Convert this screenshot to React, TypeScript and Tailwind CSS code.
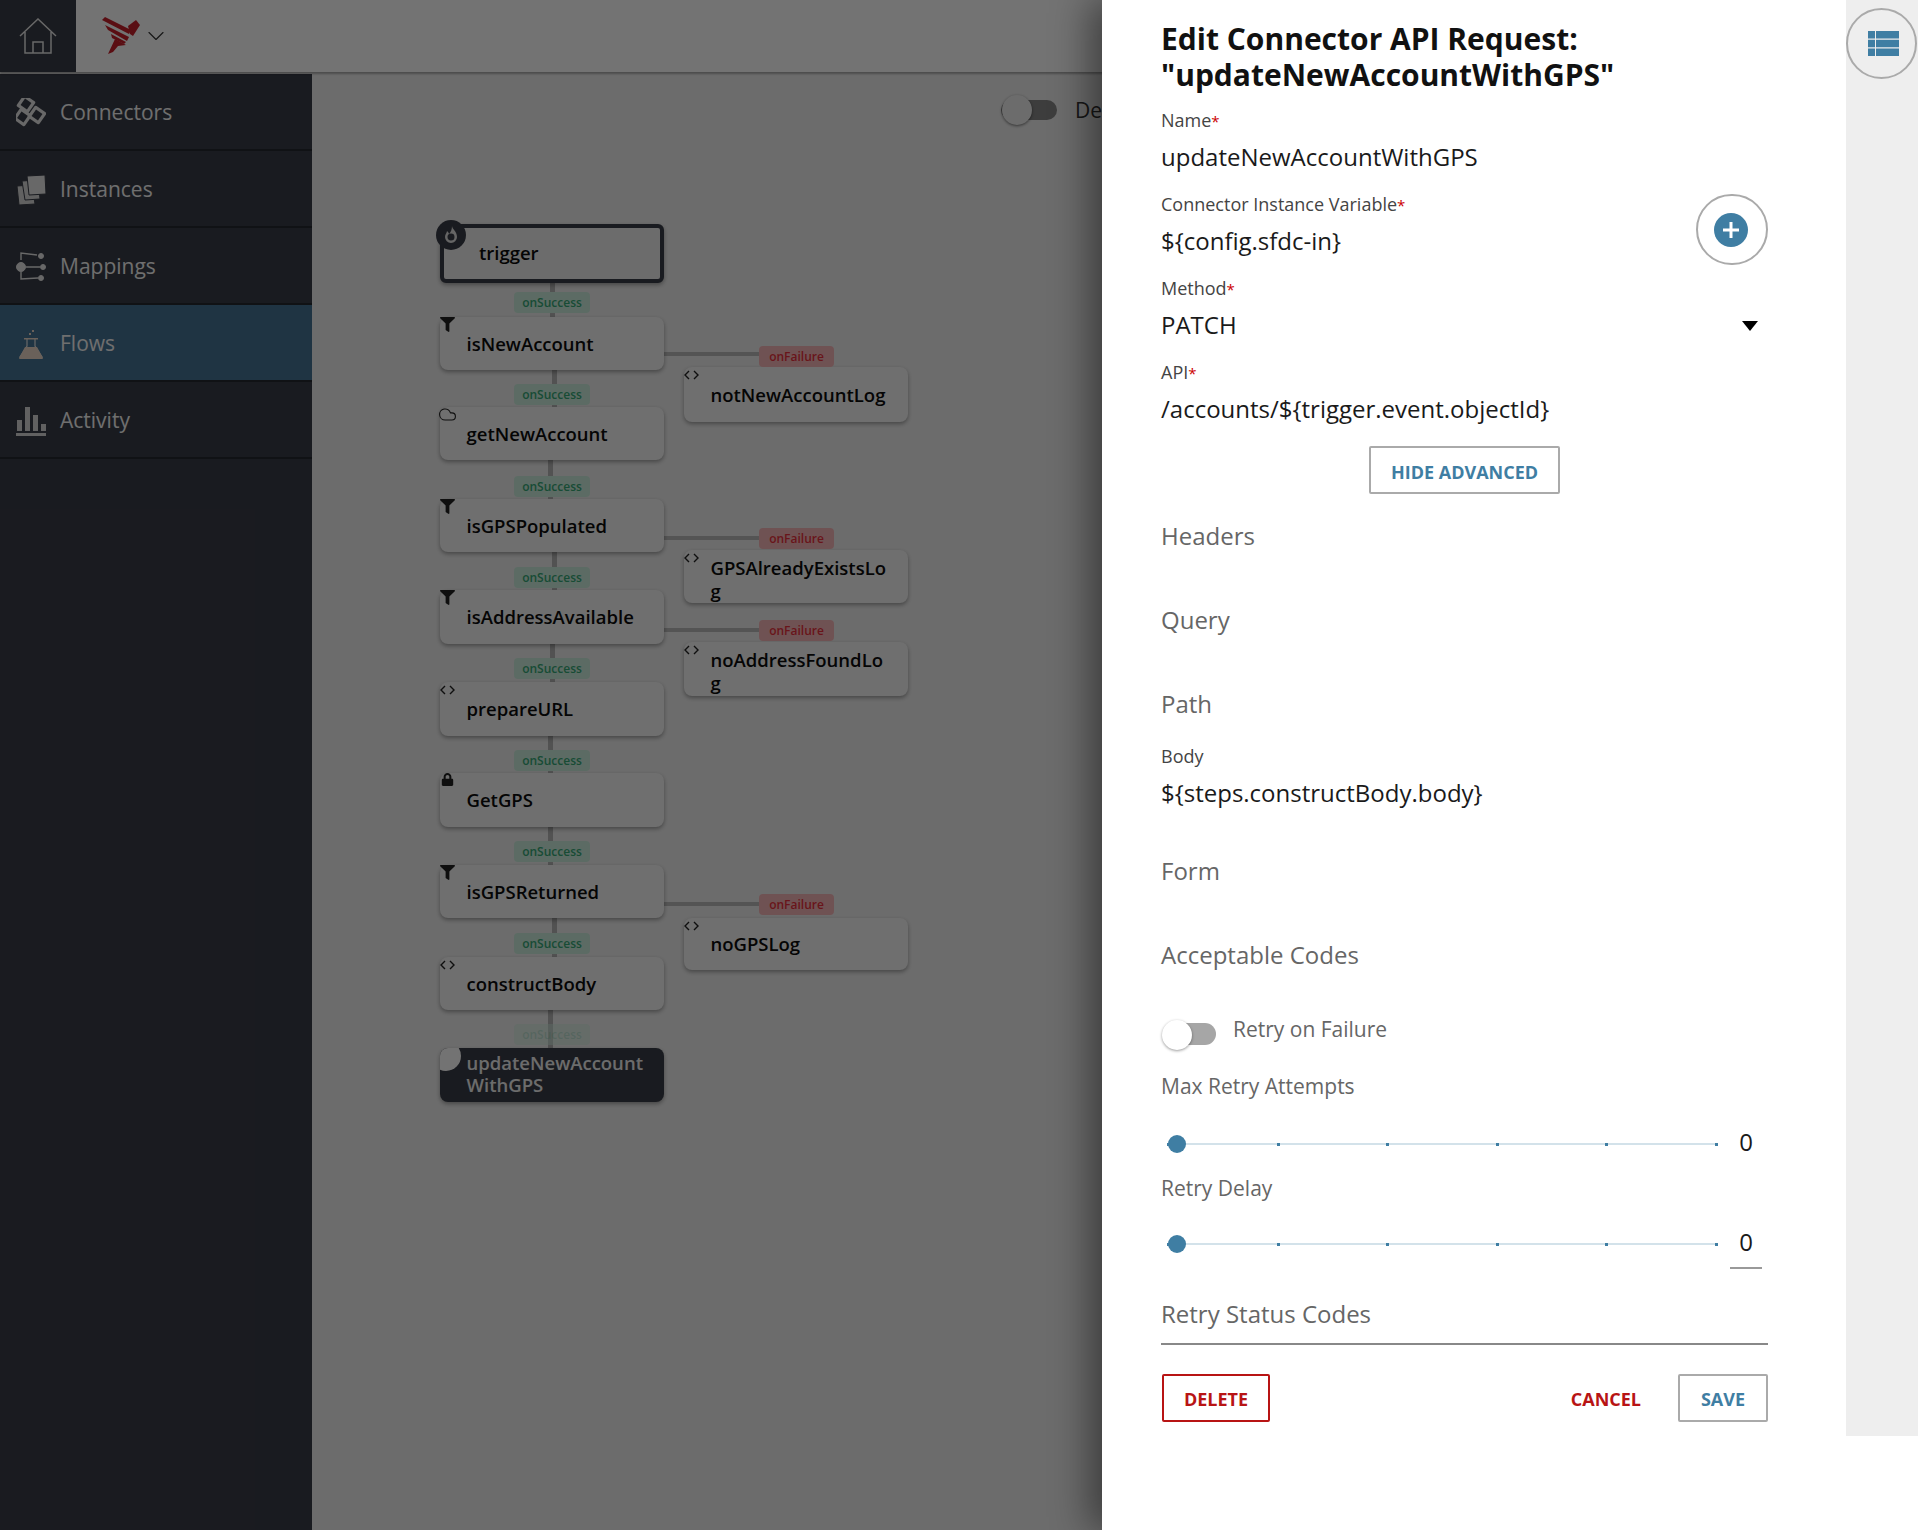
import React from 'react'
import { ChevronDown, Cloud } from 'lucide-react'
import { FaFilter, FaLock } from 'react-icons/fa'

type NodeKind = 'filter' | 'cloud' | 'code' | 'lock'

interface FlowNodeData {
  name: string;
  kind: NodeKind;
  left: number;
  top: number;
  height: number;
  wrapped?: boolean;
}

const FLOW_NODES: FlowNodeData[] = [
  { name: 'isNewAccount', kind: 'filter', left: 440, top: 317, height: 53 },
  { name: 'getNewAccount', kind: 'cloud', left: 440, top: 407, height: 53 },
  { name: 'isGPSPopulated', kind: 'filter', left: 440, top: 499, height: 53 },
  { name: 'isAddressAvailable', kind: 'filter', left: 440, top: 590, height: 54 },
  { name: 'prepareURL', kind: 'code', left: 440, top: 682, height: 54 },
  { name: 'GetGPS', kind: 'lock', left: 440, top: 773, height: 54 },
  { name: 'isGPSReturned', kind: 'filter', left: 440, top: 865, height: 53 },
  { name: 'constructBody', kind: 'code', left: 440, top: 957, height: 53 },
  { name: 'notNewAccountLog', kind: 'code', left: 684, top: 367, height: 55 },
  { name: 'GPSAlreadyExistsLog', kind: 'code', left: 684, top: 550, height: 53, wrapped: true },
  { name: 'noAddressFoundLog', kind: 'code', left: 684, top: 642, height: 54, wrapped: true },
  { name: 'noGPSLog', kind: 'code', left: 684, top: 918, height: 52 },
]

const SUCCESS_TOPS = [292, 384, 476, 567, 658, 750, 841, 933]
const FAILURE_TOPS = [346, 528, 620, 894]
const V_LINES = [
  [283, 34, 550], [370, 37, 552], [460, 39, 548], [552, 38, 552],
  [644, 38, 550], [736, 37, 548], [827, 38, 548], [918, 39, 552], [1010, 38, 548],
]
const H_LINES = [352, 536, 628, 902]

const NodeIcon = ({ kind }: { kind: NodeKind }) => {
  if (kind === 'filter') return <FaFilter className="text-[15px] text-[#222]" />
  if (kind === 'lock') return <FaLock className="text-[13px] text-[#222]" />
  if (kind === 'cloud') return <Cloud size={19} strokeWidth={1.4} className="text-[#222]" />
  return (
    <svg width="15" height="10" viewBox="0 0 15 10" fill="none" stroke="#222" strokeWidth="1.4">
      <path d="M5 1 1 5l4 4M10 1l4 4-4 4" />
    </svg>
  )
}

const ICON_TOP: Record<NodeKind, string> = {
  filter: 'top-0',
  cloud: 'top-[-2px]',
  code: 'top-[3px]',
  lock: 'top-0',
}

const FlowNode = ({ node }: { node: FlowNodeData }) => (
  <div
    className="absolute w-[224px] rounded-[8px] bg-[#f5f5f5] pl-[26.5px] pr-[16px] font-semibold text-[18.5px] leading-[23px] text-[#0c0c0c] shadow-[0_2px_4px_rgba(0,0,0,0.35)] flex items-center break-all"
    style={{ left: node.left, top: node.top, height: node.height }}
  >
    <span className={`absolute left-[-2px] w-[19px] flex justify-center ${ICON_TOP[node.kind]}`}><NodeIcon kind={node.kind} /></span>
    <span className={node.wrapped ? 'mt-[4px]' : 'mt-[-1px]'}>{node.name}</span>
  </div>
)

const ConnectorsIcon = () => (
  <svg width="30" height="30" viewBox="0 0 30 30" fill="#393d47" stroke="#e6e6e6" strokeWidth="3.2" strokeLinejoin="round">
    <rect x="4.5" y="0.5" width="11" height="11" transform="rotate(35 10 6)" />
    <rect x="1" y="13.5" width="11" height="11" transform="rotate(35 6.5 19)" />
    <rect x="15.5" y="11.5" width="11" height="11" transform="rotate(35 21 17)" />
  </svg>
)
const InstancesIcon = () => (
  <svg width="30" height="30" viewBox="0 0 30 30" fill="#d8d8d8" stroke="#393d47" strokeWidth="1">
    <path d="M1 11l15-1 3 19-16 1z" />
    <path d="M6 6l16-1 2 19-15 1z" />
    <path d="M11 1l18-1 1 19-17 1z" fill="#e6e6e6" />
  </svg>
)
const MappingsIcon = () => (
  <svg width="30" height="30" viewBox="0 0 30 30" fill="#e6e6e6" stroke="#e6e6e6">
    <circle cx="5" cy="15" r="4.5" />
    <circle cx="25" cy="4" r="2.5" />
    <circle cx="27" cy="15" r="2.5" />
    <circle cx="25" cy="26" r="2.5" />
    <path d="M5 8V1l16 2M10 15h14M5 20v7l17-1" fill="none" strokeWidth="1.4" />
  </svg>
)
const FlowsIcon = () => (
  <svg width="26" height="30" viewBox="0 0 26 30" fill="#ead7c8">
    <path d="M9 10v7L2 28h22l-7-11v-7" fill="none" stroke="#e6e6e6" strokeWidth="1.2" />
    <path d="M6 9h14v1.5H6zM7 18h12l6 11a1 1 0 0 1-1 1H2a1 1 0 0 1-1-1zM11 4h2v2h-2zM14 1h2v2h-2z" />
  </svg>
)
const ActivityIcon = () => (
  <svg width="30" height="30" viewBox="0 0 30 30" fill="#d8d8d8">
    <path d="M1 14h5v11H1zM9 1h5v24H9zM17 9h5v16h-5zM25 18h5v7h-5zM0 27h30v3H0z" />
  </svg>
)

const NAV_ITEMS = [
  { label: 'Connectors', icon: <ConnectorsIcon /> },
  { label: 'Instances', icon: <InstancesIcon /> },
  { label: 'Mappings', icon: <MappingsIcon /> },
  { label: 'Flows', icon: <FlowsIcon />, active: true },
  { label: 'Activity', icon: <ActivityIcon /> },
]

const Sidebar = () => (
  <div className="w-[312px] flex-none bg-[#393d47] text-[#f5f5f5]">
    {NAV_ITEMS.map((item) => (
      <div
        key={item.label}
        className={`h-[77px] pt-[2px] flex items-center gap-[14px] pl-[16px] border-b-2 border-[#24282f] text-[21px] ${item.active ? 'bg-[#457395]' : ''}`}
      >
        <span className="w-[30px] flex justify-center">{item.icon}</span>
        <span>{item.label}</span>
      </div>
    ))}
  </div>
)

const TopBar = () => (
  <div className="h-[72px] bg-white flex items-center relative z-10 shadow-[0_2px_2px_rgba(0,0,0,0.3)]">
    <div className="w-[76px] h-full bg-[#393d47] flex items-center justify-center">
      <svg width="38" height="36" viewBox="0 0 38 36" fill="none" stroke="#e6e6e6" strokeWidth="1.5">
        <path d="M1 18 19 1l18 17M6 14v21h26V14M14 35V24h10v11" />
      </svg>
    </div>
    {/* brand logo */}
    <svg className="ml-[25px]" width="40" height="38" viewBox="0 0 40 38" fill="#c8202a">
      <path d="M1 3 4 0l26 13-2 4z" />
      <path d="M4 8l24 12-2 4L7 13z" />
      <path d="M27 9l8-6 4 5-7 11-3-2z" />
      <path d="M10 17l15 8-2 2-12-6z" />
      <path d="M7 37l7-15 11 6-8 1-5 6z" />
    </svg>
    <ChevronDown size={28} strokeWidth={1} className="ml-[1px] text-[#333]" />
  </div>
)

const FlowCanvas = () => (
  <div className="absolute inset-0 font-['Open_Sans',sans-serif]">
    <div className="absolute left-[1001px] top-[100px] w-[56px] h-[20px] rounded-full bg-[#888]" />
    <div className="absolute left-[1002px] top-[95px] w-[30px] h-[30px] rounded-full bg-[#f0f0f0] shadow-[0_1px_3px_rgba(0,0,0,0.5)]" />
    <div className="absolute left-[1075px] top-[95px] text-[21px] text-[#333]">De</div>

    {V_LINES.map(([top, height, left]) => (
      <div key={top} className="absolute w-[5px] bg-[#b5b5b5]" style={{ top, height, left }} />
    ))}
    {H_LINES.map((top) => (
      <div key={top} className="absolute left-[664px] w-[96px] h-[4px] bg-[#bbb]" style={{ top }} />
    ))}

    <div className="absolute left-[440px] top-[224px] w-[224px] h-[59px] rounded-[6px] border-[4px] border-[#393d47] bg-[#f0f0f0] pl-[35px] flex items-center font-semibold text-[18.5px] text-[#0c0c0c] shadow-[0_2px_4px_rgba(0,0,0,0.35)]">
      <span className="mt-[-2px]">trigger</span>
    </div>
    <div className="absolute left-[436px] top-[220px] w-[30px] h-[30px] rounded-full bg-[#393d47] flex items-center justify-center">
      <svg width="14" height="18" viewBox="0 0 14 18" fill="#e0e0e0">
        <path fillRule="evenodd" d="M8 0c0 3 5 5 5 11a6 6 0 0 1-12 0c0-3 2-4 2-6 1 1 2 2 2 3 2-2 3-5 3-8zM7 7.500a3.500 3.500 0 1 0 .01 7 3.500 3.500 0 0 0-.01-7z" />
      </svg>
    </div>

    {FLOW_NODES.map((node) => <FlowNode key={node.name} node={node} />)}

    <div className="absolute left-[440px] top-[1048px] w-[224px] h-[54px] rounded-[8px] overflow-hidden bg-[#393d47] pl-[26.5px] pt-[4px] font-semibold text-[18.5px] leading-[22px] text-[#f0f0f0] shadow-[0_2px_4px_rgba(0,0,0,0.35)]">
      <span className="absolute left-[-9px] top-[-7px] w-[30px] h-[30px] rounded-full bg-white" />
      <span className="relative">updateNewAccount<br />WithGPS</span>
    </div>

    {SUCCESS_TOPS.map((top) => (
      <div key={top} className="absolute left-[514px] w-[76px] h-[21px] rounded-[4px] bg-[#cdeedd] text-[#35a877] text-[12px] font-semibold leading-[21px] text-center" style={{ top }}>onSuccess</div>
    ))}
    <div className="absolute left-[514px] top-[1024px] w-[76px] h-[21px] rounded-[4px] bg-[#cdeedd]/50 text-[#35a877]/20 text-[12px] font-semibold leading-[21px] text-center">onSuccess</div>
    {FAILURE_TOPS.map((top) => (
      <div key={top} className="absolute left-[759px] w-[75px] h-[21px] rounded-[4px] bg-[#f7b6b8] text-[#e8303c] text-[12px] font-semibold leading-[21px] text-center" style={{ top }}>onFailure</div>
    ))}
  </div>
)

const Field = ({ label, value, required = true }: { label: string; value: string; required?: boolean }) => (
  <div className="h-[84px]">
    <div className="h-[24px] text-[18px] leading-[24px] text-[#444]">
      {label}{required && <span className="text-[#c00] text-[15px]">*</span>}
    </div>
    <div className="mt-[7px] h-[36px] text-[24px] leading-[36px] text-[#1a1a1a]">{value}</div>
  </div>
)

const CollapsedRow = ({ label }: { label: string }) => (
  <div className="h-[84px] flex items-center text-[24px] text-[#666]">{label}</div>
)

const RetrySlider = ({ label, underlined, gap }: { label: string; underlined?: boolean; gap: string }) => (
  <div className="h-[102px]">
    <div className="h-[28px] text-[21px] leading-[28px] text-[#666]">{label}</div>
    <div className={`h-[36px] flex items-center ${gap}`}>
      <div className="relative w-[551px] ml-[6px] h-[2px] bg-[#d3e2ea] flex justify-between items-center">
        {[0, 1, 2, 3, 4, 5].map((tick) => (
          <span key={tick} className="w-[3px] h-[3px] bg-[#3f7ea3]" />
        ))}
        <span className="absolute left-[1px] top-[-8px] w-[18px] h-[18px] rounded-full bg-[#3f7ea3]" />
      </div>
      <div className="relative ml-[12px] w-[32px] h-[36px] text-center text-[24px] leading-[32px] text-[#1a1a1a]">
        0
        {underlined && <span className="absolute left-0 right-0 top-[41px] h-[2px] bg-[#999]" />}
      </div>
    </div>
  </div>
)

const EditPanel = () => (
  <div className="absolute right-0 top-0 bottom-0 w-[816px] z-20 bg-white flex font-['Open_Sans',sans-serif] shadow-[-12px_0_36px_rgba(0,0,0,0.45)]">
    <div className="w-[607px] ml-[59px] flex-none">
      <h1 className="pt-[21px] h-[108px] text-[30px] leading-[36px] font-bold text-[#111]">
        Edit Connector API Request:<br />"updateNewAccountWithGPS"
      </h1>
      <Field label="Name" value="updateNewAccountWithGPS" />
      <div className="flex justify-between items-start">
        <div className="flex-1"><Field label="Connector Instance Variable" value="${config.sfdc-in}" /></div>
        <button className="mt-[2px] w-[72px] h-[71px] rounded-full border-2 border-[#aaa] flex items-center justify-center">
          <span className="w-[34px] h-[34px] mr-[2px] rounded-full bg-[#3f7ea3] flex items-center justify-center">
            <svg width="20" height="20" viewBox="0 0 20 20" fill="none" stroke="white" strokeWidth="3"><path d="M10 2v16M2 10h16" /></svg>
          </span>
        </button>
      </div>
      <div className="relative">
        <Field label="Method" value="PATCH" />
        <span className="absolute right-[10px] top-[45px] w-0 h-0 border-x-[8px] border-x-transparent border-t-[10px] border-t-black" />
      </div>
      <Field label="API" value="/accounts/${trigger.event.objectId}" />
      <div className="mt-[2px] flex justify-center">
        <button className="w-[191px] h-[48px] pt-[4px] border-2 border-[#aaa] rounded-[2px] text-[18px] font-bold text-[#3f7ea3]">HIDE ADVANCED</button>
      </div>
      <CollapsedRow label="Headers" />
      <CollapsedRow label="Query" />
      <CollapsedRow label="Path" />
      <div className="-mt-[2px]"><Field label="Body" value="${steps.constructBody.body}" required={false} /></div>
      <div className="mt-[1px]"><CollapsedRow label="Form" /></div>
      <CollapsedRow label="Acceptable Codes" />
      <div className="h-[75px] pt-[23px] flex items-start">
        <div className="relative w-[54px] h-[30px] ml-[1px]">
          <span className="absolute right-0 top-[3px] w-[44px] h-[22px] rounded-full bg-[#a6a6a6]" />
          <span className="absolute left-0 top-0 w-[30px] h-[30px] rounded-full bg-white shadow-[0_1px_3px_rgba(0,0,0,0.4)]" />
        </div>
        <span className="ml-[17px] mt-[-6px] text-[21px] leading-[30px] text-[#666]">Retry on Failure</span>
      </div>
      <RetrySlider label="Max Retry Attempts" gap="mt-[26px]" />
      <RetrySlider label="Retry Delay" underlined gap="mt-[24px]" />
      <div className="h-[69px] flex items-end border-b-2 border-[#888] pb-[11px] text-[24px] leading-[36px] text-[#666]">Retry Status Codes</div>
      <div className="mt-[29px] flex items-center">
        <button className="ml-[1px] w-[108px] h-[48px] pt-[3px] border-2 border-[#b81414] rounded-[2px] text-[18px] font-bold text-[#b81414]">DELETE</button>
        <button className="ml-auto pt-[3px] text-[18px] font-bold text-[#b81414]">CANCEL</button>
        <button className="ml-[37px] w-[90px] h-[48px] pt-[3px] border-2 border-[#aaa] rounded-[2px] text-[18px] font-bold text-[#3f7ea3]">SAVE</button>
      </div>
    </div>
    <div className="ml-[78px] w-[72px] h-[1436px] bg-[#eee]">
      <div className="mt-[8px] w-[71px] h-[71px] pl-[3px] rounded-full border-2 border-[#aaa] flex items-center justify-center">
        <svg width="31" height="25" viewBox="0 0 31 25" fill="#3f7ea3">
          <path d="M0 0h7v7.500H0zM8 0h23v7.500H8zM0 8.750h7v7.500H0zM8 8.750h23v7.500H8zM0 17.500h7V25H0zM8 17.500h23V25H8z" />
        </svg>
      </div>
    </div>
  </div>
)

const App = () => (
  <div className="relative h-[1530px] w-[1918px] overflow-hidden bg-[#f0f0f0] font-['Open_Sans',sans-serif]">
    <TopBar />
    <div className="h-[1458px] mt-[2px] flex">
      <Sidebar />
    </div>
    <FlowCanvas />
    {/* modal backdrop */}
    <div className="absolute inset-0 z-10 bg-black/55" />
    <EditPanel />
  </div>
)

export default App
